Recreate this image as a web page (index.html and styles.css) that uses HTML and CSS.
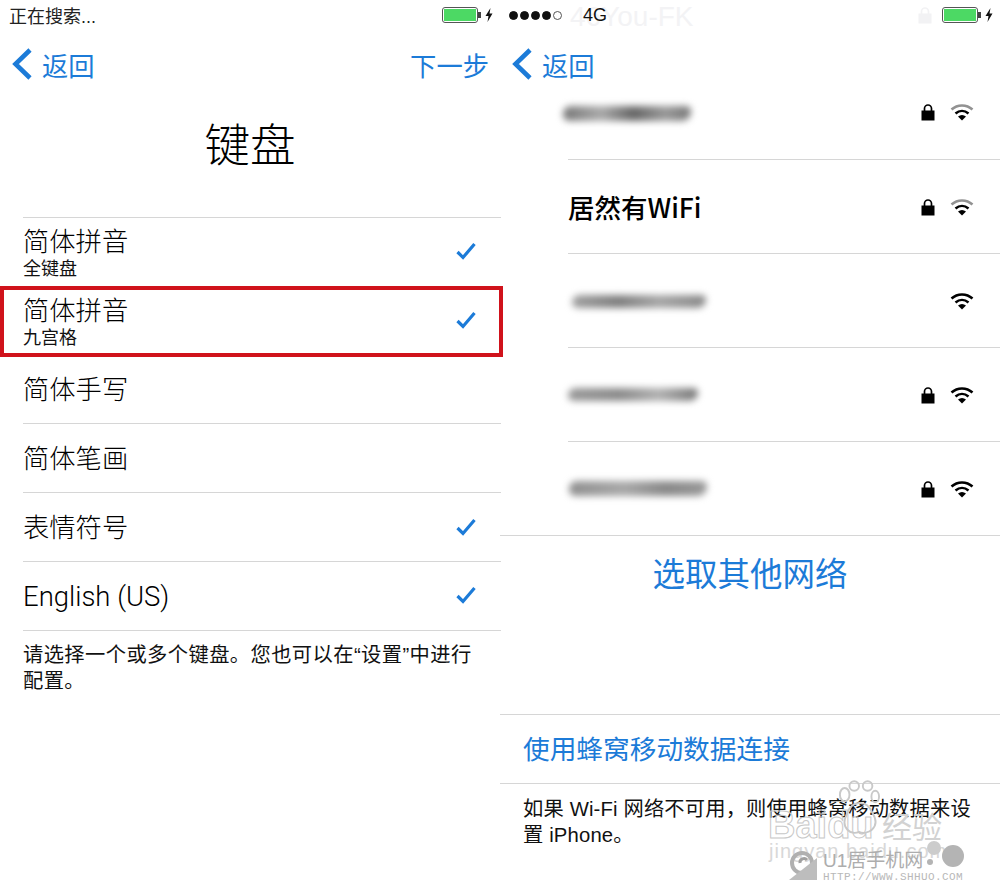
FILE: index.html
```html
<!DOCTYPE html>
<html lang="zh-CN">
<head>
    <meta charset="UTF-8">
    <title>键盘</title>
    <link rel="stylesheet" href="styles.css">
</head>
<body>
    <svg class="defs" width="0" height="0">
        <symbol id="check" viewBox="0 0 20 18">
            <path d="M1.5 10 L7 15.5 L18.5 2" fill="none" stroke="currentColor" stroke-width="3.2"/>
        </symbol>
        <symbol id="back" viewBox="0 0 22 32">
            <path d="M19 2 L4.5 16 L19 30" fill="none" stroke="currentColor" stroke-width="4.6"/>
        </symbol>
        <symbol id="lock" viewBox="0 0 14 18">
            <path d="M3.5 8 V5.5 a3.5 3.5 0 0 1 7 0 V8" fill="none" stroke="currentColor" stroke-width="1.7"/>
            <rect x="0.5" y="7.5" width="13" height="10" fill="currentColor"/>
        </symbol>
        <symbol id="wifi" viewBox="0 0 24 18">
            <path d="M1.5 6.5 C7.5 1 16.5 1 22.500 6.500" fill="none" stroke="currentColor" stroke-width="2.5"/>
            <path d="M5.500 10.500 C9.500 7 14.500 7 18.500 10.500" fill="none" stroke="currentColor" stroke-width="2.500"/>
            <path d="M8 13.500 C10.500 11.500 13.500 11.500 16 13.500 L12 17.500 Z" fill="currentColor"/>
        </symbol>
        <symbol id="wifi-weak" viewBox="0 0 24 18">
            <path d="M1.5 6.5 C7.5 1 16.5 1 22.500 6.500" fill="none" stroke="#929292" stroke-width="2.500"/>
            <path d="M5.500 10.500 C9.500 7 14.500 7 18.500 10.500" fill="none" stroke="currentColor" stroke-width="2.500"/>
            <path d="M8 13.500 C10.500 11.500 13.500 11.500 16 13.500 L12 17.500 Z" fill="currentColor"/>
        </symbol>
        <symbol id="bolt" viewBox="0 0 8 14">
            <path d="M5.500 0 L0.500 8 H3.500 L2.500 14 L7.500 5.500 H4.500 Z" fill="currentColor"/>
        </symbol>
    </svg>

    <div class="screens">
        <!-- left: keyboard picker -->
        <div class="screen">
            <div class="status">
                <span class="status-text">正在搜索...</span>
                <div class="battery-wrap">
                    <span class="battery"><span class="battery-fill"></span></span>
                    <svg class="bolt"><use href="#bolt"/></svg>
                </div>
            </div>
            <div class="nav">
                <a class="back"><svg class="chevron"><use href="#back"/></svg>返回</a>
                <a class="next">下一步</a>
            </div>
            <h1 class="title">键盘</h1>
            <ul class="kb-list">
                <li class="kb-row">
                    <div class="kb-label"><span class="kb-name">简体拼音</span><span class="kb-sub">全键盘</span></div>
                    <svg class="check"><use href="#check"/></svg>
                </li>
                <li class="kb-row picked">
                    <div class="kb-label"><span class="kb-name">简体拼音</span><span class="kb-sub">九宫格</span></div>
                    <svg class="check"><use href="#check"/></svg>
                </li>
                <li class="kb-row"><span class="kb-name">简体手写</span></li>
                <li class="kb-row"><span class="kb-name">简体笔画</span></li>
                <li class="kb-row">
                    <span class="kb-name">表情符号</span>
                    <svg class="check"><use href="#check"/></svg>
                </li>
                <li class="kb-row">
                    <span class="kb-name latin">English (US)</span>
                    <svg class="check"><use href="#check"/></svg>
                </li>
            </ul>
            <p class="note kb-note">请选择一个或多个键盘。您也可以在“设置”中进行配置。</p>
        </div>

        <!-- right: wifi list -->
        <div class="screen">
            <div class="status">
                <span class="signal">
                    <i class="dot"></i><i class="dot"></i><i class="dot"></i><i class="dot"></i><i class="dot empty"></i>
                </span>
                <span class="carrier">4G</span>
                <span class="ghost">46You-FK</span>
                <div class="battery-wrap">
                    <svg class="ghost-lock"><use href="#lock"/></svg>
                    <span class="battery"><span class="battery-fill"></span></span>
                    <svg class="bolt"><use href="#bolt"/></svg>
                </div>
            </div>
            <div class="nav">
                <a class="back"><svg class="chevron"><use href="#back"/></svg>返回</a>
            </div>
            <ul class="wifi-list">
                <li class="wifi-row first">
                    <span class="smear s1"></span>
                    <div class="wifi-icons">
                        <svg class="lock"><use href="#lock"/></svg>
                        <svg class="wifi"><use href="#wifi-weak"/></svg>
                    </div>
                </li>
                <li class="wifi-row">
                    <span class="wifi-name">居然有WiFi</span>
                    <div class="wifi-icons">
                        <svg class="lock"><use href="#lock"/></svg>
                        <svg class="wifi"><use href="#wifi-weak"/></svg>
                    </div>
                </li>
                <li class="wifi-row">
                    <span class="smear s2"></span>
                    <div class="wifi-icons">
                        <svg class="wifi"><use href="#wifi"/></svg>
                    </div>
                </li>
                <li class="wifi-row">
                    <span class="smear s3"></span>
                    <div class="wifi-icons">
                        <svg class="lock"><use href="#lock"/></svg>
                        <svg class="wifi"><use href="#wifi"/></svg>
                    </div>
                </li>
                <li class="wifi-row last">
                    <span class="smear s4"></span>
                    <div class="wifi-icons">
                        <svg class="lock"><use href="#lock"/></svg>
                        <svg class="wifi"><use href="#wifi"/></svg>
                    </div>
                </li>
            </ul>
            <div class="other-net">选取其他网络</div>
            <div class="cell-link">使用蜂窝移动数据连接</div>
            <p class="note cell-note">如果 Wi-Fi 网络不可用&#xFF0C;则使用蜂窝移动数据来设置 iPhone。</p>
        </div>
    </div>

    <!-- watermarks sitting over the screenshot -->
    <div class="mark-baidu">
        <svg class="paw" viewBox="0 0 44 58">
            <g fill="none" stroke="#c9c9c9" stroke-width="2">
                <ellipse cx="7" cy="15" rx="5" ry="7"/>
                <ellipse cx="17" cy="6" rx="5" ry="5"/>
                <ellipse cx="31" cy="6" rx="5" ry="5"/>
                <ellipse cx="39" cy="17" rx="4" ry="6"/>
                <path d="M9 36 C14 20 30 20 36 34 C46 50 30 58 22 54 C14 58 2 50 9 36 Z"/>
            </g>
        </svg>
        <span class="mark-word">Baidu</span><span class="mark-jy">经验</span>
        <div class="mark-url">jingyan.baidu.com</div>
    </div>
    <div class="mark-shhuo">
        <svg class="shhuo-logo" viewBox="0 0 30 31">
            <circle cx="14" cy="13" r="10" fill="none" stroke="#b0b0b0" stroke-width="4"/>
            <path d="M12 13 a4 4 0 0 1 7 -3" fill="none" stroke="#a0a0a0" stroke-width="3"/>
            <path d="M1 30 L29 30 L29 8 Z" fill="#bdbdbd"/>
        </svg>
        <div>
            <div class="shhuo-name">U1居手机网</div>
            <div class="shhuo-url">HTTP://WWW.SHHUO.COM</div>
        </div>
        <i class="blob b1"></i><i class="blob b2"></i><i class="blob b3"></i>
    </div>
</body>
</html>
```

FILE: styles.css
```css
* {
    box-sizing: border-box;
}
html, body {
    margin: 0;
    padding: 0;
    height: 888px;
    overflow: hidden;
}
body {
    position: relative;
    background-color: #fff;
    color: #111;
    font-family: "Liberation Sans", "Noto Sans CJK SC", sans-serif;
}
.defs {
    display: block;
    height: 0;
}
.screens {
    display: grid;
    grid-template-columns: 500px 500px;
    height: 888px;
}
.screen {
    display: flex;
    flex-direction: column;
    min-width: 0;
}

/* status bar */
.status {
    position: relative;
    display: flex;
    align-items: center;
    height: 30px;
    padding: 0 7px 0 9px;
    font-size: 18px;
}
.status-text {
    color: #222;
}
.battery-wrap {
    display: flex;
    align-items: center;
    gap: 5px;
    margin-left: auto;
}
.battery {
    position: relative;
    display: block;
    width: 36px;
    height: 16px;
    border: 1px solid #555;
    border-radius: 3px;
    padding: 1px;
    margin-right: 2px;
}
.battery::after {
    content: "";
    position: absolute;
    right: -4px;
    top: 4px;
    width: 3px;
    height: 6px;
    background-color: #444;
}
.battery-fill {
    display: block;
    height: 100%;
    background-color: #4cd964;
}
.bolt {
    width: 8px;
    height: 14px;
    color: #111;
}
.signal {
    display: flex;
    gap: 2px;
}
.dot {
    display: block;
    width: 9px;
    height: 9px;
    border-radius: 50%;
    background-color: #111;
    border: 1px solid #111;
}
.dot.empty {
    background-color: #fff;
    border-color: #555;
}
.carrier {
    margin-left: 21px;
    position: relative;
}
.ghost {
    position: absolute;
    left: 70px;
    top: 1px;
    font-size: 28px;
    color: #f3f3f5;
    z-index: -1;
}
.ghost-lock {
    width: 14px;
    height: 18px;
    color: #f2f2f4;
    margin-right: 5px;
}

/* nav */
.nav {
    display: flex;
    justify-content: space-between;
    align-items: center;
    height: 68px;
    padding: 0 11px;
    font-size: 26.3px;
    color: #1c7bd8;
}
.back {
    display: flex;
    align-items: center;
    gap: 9px;
}
.chevron {
    width: 22px;
    height: 32px;
}

/* left */
.title {
    margin: 0;
    height: 119px;
    padding-top: 16px;
    text-align: center;
    font-size: 45.5px;
    line-height: 65px;
    font-weight: 300;
    color: #000;
}
.kb-list {
    list-style: none;
    margin: 0 0 0 23px;
    padding: 0;
    width: 478px;
    border-top: 1px solid #d6d6d6;
}
.kb-row {
    position: relative;
    display: flex;
    justify-content: space-between;
    align-items: center;
    height: 68.8px;
    padding-right: 25px;
    border-bottom: 1px solid #d6d6d6;
}
.kb-label {
    display: flex;
    flex-direction: column;
    margin-top: 2px;
}
.kb-name {
    font-size: 26.3px;
    line-height: 36px;
    font-weight: 300;
    color: #000;
    margin-top: 2px;
}
.latin {
    font-family: Roboto, sans-serif;
    font-size: 27.5px;
}
.kb-sub {
    font-size: 18px;
    line-height: 22px;
    margin-bottom: -1px;
}
.kb-label .kb-name {
    line-height: 32px;
    margin-top: 0;
}
.check {
    width: 20px;
    height: 18px;
    margin-top: -1px;
    color: #1c7bd8;
}
/* red annotation around second row */
.picked::before {
    content: "";
    position: absolute;
    left: -23px;
    right: -2px;
    top: -1px;
    bottom: -2px;
    border: 4px solid #d0121b;
}
.note {
    margin: 0;
    font-size: 20.3px;
    line-height: 26px;
    letter-spacing: 0.4px;
}
.kb-note {
    padding: 11px 24px 0 23px;
}

/* right */
.wifi-list {
    list-style: none;
    margin: 0;
    padding: 0;
}
.wifi-row {
    display: flex;
    align-items: center;
    justify-content: space-between;
    height: 94px;
    margin-left: 68px;
    padding-right: 26px;
    border-bottom: 1px solid #d6d6d6;
}
.wifi-row.first {
    height: 62px;
    align-items: flex-start;
    padding-top: 5px;
}
.wifi-row.last {
    margin-left: 0;
    padding-left: 68px;
}
.wifi-name {
    font-family: "Noto Sans CJK SC", sans-serif;
    font-size: 26.5px;
    font-weight: 500;
    color: #000;
}
.wifi-icons {
    display: flex;
    align-items: center;
    gap: 15px;
    margin-left: auto;
}
.lock {
    width: 14px;
    height: 18px;
    color: #000;
}
.wifi {
    width: 24px;
    height: 18px;
    color: #000;
}
.smear {
    display: block;
    height: 15px;
    border-radius: 8px 5px 9px 6px;
    filter: blur(3.5px);
}
.s1 {
    width: 128px;
    margin-left: -5px;
    margin-top: 3px;
    background: linear-gradient(90deg, #777, #aaa 30%, #666 55%, #999 80%, #777);
}
.s2 {
    width: 134px;
    margin-left: 4px;
    height: 13px;
    margin-top: 2px;
    background: linear-gradient(90deg, #a0a0a0, #7d7d7d 35%, #a5a5a5 65%, #888);
}
.s3 {
    width: 130px;
    margin-left: 0;
    height: 13px;
    background: linear-gradient(90deg, #999, #8a8a8a 40%, #b0b0b0 70%, #777);
}
.s4 {
    width: 138px;
    margin-left: 1px;
    background: linear-gradient(90deg, #8f8f8f, #a8a8a8 40%, #888 70%, #999);
}
.other-net {
    height: 178px;
    padding-top: 14px;
    text-align: center;
    font-size: 32.5px;
    line-height: 50px;
    color: #1c7bd8;
}
.cell-link {
    height: 70px;
    padding-left: 23px;
    border-top: 1px solid #d6d6d6;
    border-bottom: 1px solid #d6d6d6;
    font-size: 26.7px;
    line-height: 70px;
    color: #1c7bd8;
}
.cell-note {
    padding: 12px 20px 0 23px;
    letter-spacing: 0.15px;
}

/* watermarks */
.mark-baidu {
    position: absolute;
    left: 766px;
    top: 780px;
    width: 190px;
    height: 82px;
}
.paw {
    position: absolute;
    left: 72px;
    top: 0;
    width: 42px;
    height: 56px;
}
.mark-word {
    position: absolute;
    left: 2px;
    top: 24px;
    font-size: 38px;
    font-weight: 700;
    color: transparent;
    -webkit-text-stroke: 1px #c8c8c8;
}
.mark-jy {
    position: absolute;
    left: 116px;
    top: 30px;
    font-size: 30px;
    line-height: 36px;
    color: #d2d2d2;
}
.mark-url {
    position: absolute;
    left: 3px;
    top: 60px;
    font-size: 20px;
    letter-spacing: 1px;
    white-space: nowrap;
    color: #d8d8d8;
}
.mark-shhuo {
    position: absolute;
    left: 788px;
    top: 850px;
    display: flex;
    gap: 5px;
    align-items: flex-start;
}
.shhuo-logo {
    width: 30px;
    height: 31px;
}
.shhuo-name {
    font-size: 19px;
    line-height: 22px;
    color: #adadad;
}
.shhuo-url {
    font-family: "Liberation Mono", monospace;
    font-size: 11px;
    line-height: 11px;
    letter-spacing: 0.4px;
    color: #b8b8b8;
}
.blob {
    position: absolute;
    display: block;
    border-radius: 50%;
    background-color: #b4b4b4;
}
.b1 {
    left: 139px;
    top: -9px;
    width: 14px;
    height: 14px;
    background-color: #ccc;
}
.b2 {
    left: 154px;
    top: -5px;
    width: 22px;
    height: 22px;
}
.b3 {
    left: 139px;
    top: 9px;
    width: 6px;
    height: 6px;
}
```
